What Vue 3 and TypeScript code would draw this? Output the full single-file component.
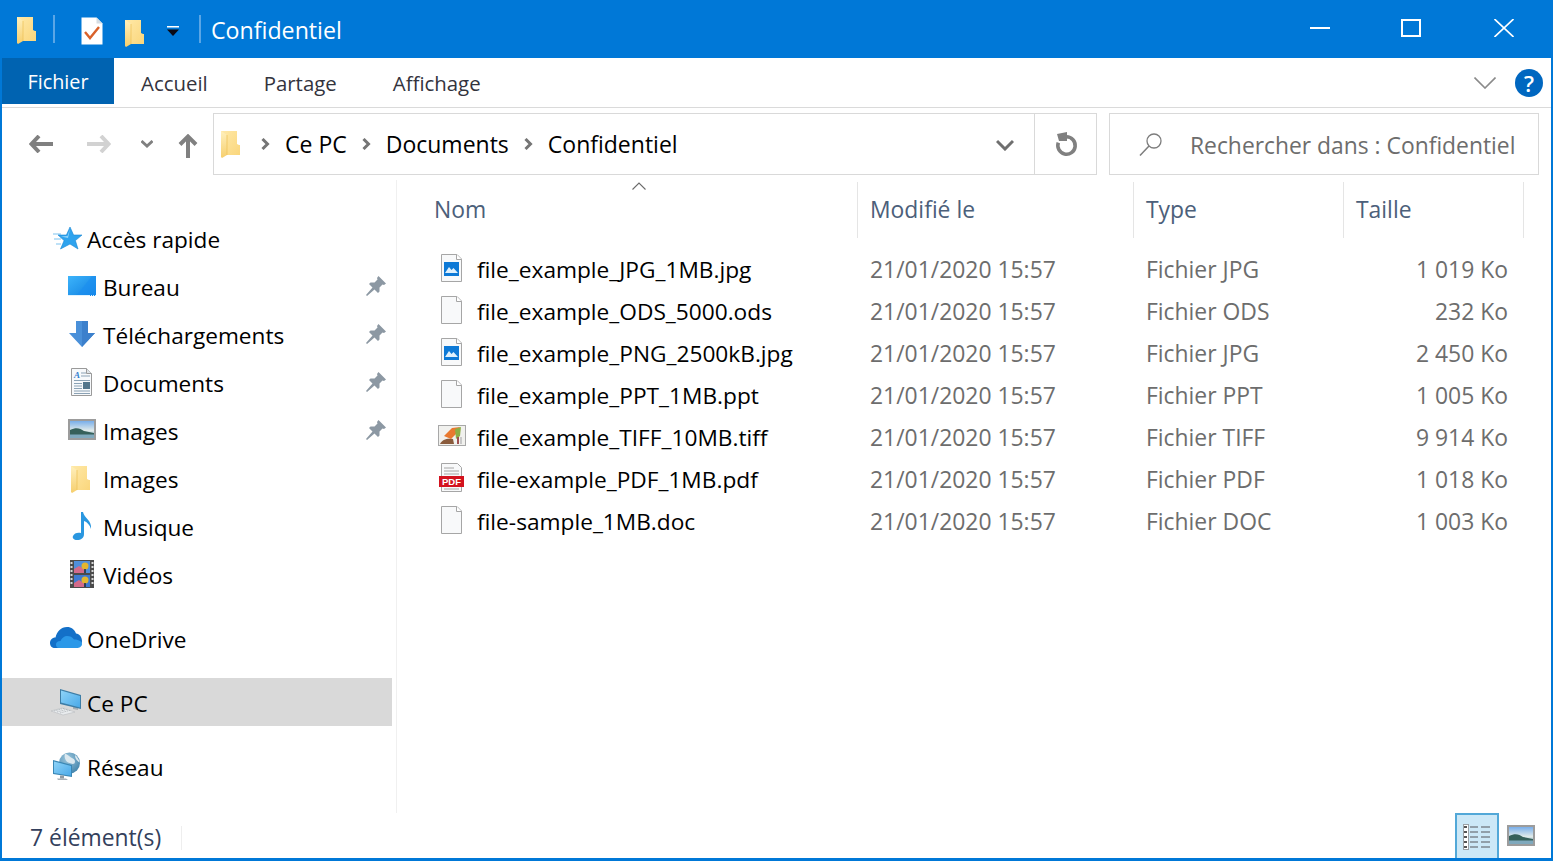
<script setup lang="ts">
interface NavItem {
  label: string;
  icon: string;
  pinned?: boolean;
  sub?: boolean;
  active?: boolean;
}

interface FileRow {
  name: string;
  icon: string;
  type: string;
  size: string;
}

const tabs = ['Accueil', 'Partage', 'Affichage'];
const crumbs = ['Ce PC', 'Documents', 'Confidentiel'];

// sidebar groups, a gap sits between each of them
const navGroups: NavItem[][] = [
  [
    { label: 'Accès rapide', icon: 'i-star' },
    { label: 'Bureau', icon: 'i-desktop', pinned: true, sub: true },
    { label: 'Téléchargements', icon: 'i-download', pinned: true, sub: true },
    { label: 'Documents', icon: 'i-docs', pinned: true, sub: true },
    { label: 'Images', icon: 'i-pictures', pinned: true, sub: true },
    { label: 'Images', icon: 'i-folder', sub: true },
    { label: 'Musique', icon: 'i-music', sub: true },
    { label: 'Vidéos', icon: 'i-video', sub: true },
  ],
  [{ label: 'OneDrive', icon: 'i-cloud' }],
  [{ label: 'Ce PC', icon: 'i-pc', active: true }],
  [{ label: 'Réseau', icon: 'i-network' }],
];

const files: FileRow[] = [
  { name: 'file_example_JPG_1MB.jpg', icon: 'i-jpg', type: 'Fichier JPG', size: '1 019 Ko' },
  { name: 'file_example_ODS_5000.ods', icon: 'i-blank', type: 'Fichier ODS', size: '232 Ko' },
  { name: 'file_example_PNG_2500kB.jpg', icon: 'i-jpg', type: 'Fichier JPG', size: '2 450 Ko' },
  { name: 'file_example_PPT_1MB.ppt', icon: 'i-blank', type: 'Fichier PPT', size: '1 005 Ko' },
  { name: 'file_example_TIFF_10MB.tiff', icon: 'i-tiff', type: 'Fichier TIFF', size: '9 914 Ko' },
  { name: 'file-example_PDF_1MB.pdf', icon: 'i-pdf', type: 'Fichier PDF', size: '1 018 Ko' },
  { name: 'file-sample_1MB.doc', icon: 'i-blank', type: 'Fichier DOC', size: '1 003 Ko' },
];

const modified = '21/01/2020 15:57';
</script>

<template>
  <div class="window">
    <!-- icons used more than once -->
    <svg class="defs" aria-hidden="true">
      <defs>
        <linearGradient id="folder-fill" x1="0" y1="0" x2="1" y2="1">
          <stop offset="0" stop-color="#ffe9a8" />
          <stop offset="1" stop-color="#fad67c" />
        </linearGradient>
        <linearGradient id="folder-flap" x1="0" y1="0" x2="0" y2="1">
          <stop offset="0" stop-color="#fff0bd" />
          <stop offset="1" stop-color="#f6cf6e" />
        </linearGradient>
        <linearGradient id="sky" x1="0" y1="0" x2="0" y2="1">
          <stop offset="0" stop-color="#6ea8ea" />
          <stop offset="0.55" stop-color="#dfeaea" />
          <stop offset="1" stop-color="#6d9cb0" />
        </linearGradient>
        <linearGradient id="screen" x1="0" y1="0" x2="1" y2="1">
          <stop offset="0" stop-color="#3db4fb" />
          <stop offset="1" stop-color="#0f7fe0" />
        </linearGradient>
        <linearGradient id="pc-screen" x1="0" y1="0" x2="1" y2="1">
          <stop offset="0" stop-color="#8ed3f8" />
          <stop offset="1" stop-color="#4aa9e8" />
        </linearGradient>
        <radialGradient id="globe" cx=".4" cy=".3" r=".8">
          <stop offset="0" stop-color="#9cc6dc" />
          <stop offset="1" stop-color="#3c7fa8" />
        </radialGradient>
      </defs>
      <symbol id="i-folder" viewBox="0 0 32 32">
        <path d="M5 4h16v13l2 1h1v10H5z" fill="url(#folder-fill)" />
        <path d="M5 4l6 4v20l-5 3-1-1z" fill="url(#folder-flap)" />
        <path d="M11 8v20" stroke="#eec35c" stroke-width=".8" />
      </symbol>
      <symbol id="i-star" viewBox="0 0 32 32">
        <path d="M3 12h8M4 17h7M6 22h5" stroke="#a9d8f5" stroke-width="1.400" />
        <path d="M20 5l3.600 8H32l-6.600 5.600L28 27l-8-5-9.500 5 3.600-8.400L8 13h8.400z" fill="#2ea3ee" stroke="#1a86d4" stroke-width=".6" />
        <path d="M20 7l-2.500 7-6.500 .5 7 1.500z" fill="#8fd3fa" />
      </symbol>
      <symbol id="i-desktop" viewBox="0 0 32 32">
        <rect x="2" y="6" width="28" height="20" fill="url(#screen)" />
        <path d="M10 26L26 6h4v20z" fill="#1b8ef0" opacity=".6" />
        <path d="M2 25.500h28" stroke="#dff2ff" stroke-width="1" stroke-dasharray="22 1 1 1 1 1" />
      </symbol>
      <symbol id="i-download" viewBox="0 0 32 32">
        <path d="M10 3h12v12h7L16 29 3 15h7z" fill="#4a90d9" />
        <path d="M16 3h6v12h7L16 29z" fill="#3c80cc" />
      </symbol>
      <symbol id="i-pictures" viewBox="0 0 32 32">
        <rect x="3" y="6" width="26" height="19" fill="url(#sky)" stroke="#9c9c9c" stroke-width="2" />
        <path d="M4 16c6-3 10-2 14 1l10 2v2H4z" fill="#35605a" />
        <path d="M4 20.500h24V24H4z" fill="#7fa9bd" />
      </symbol>
      <symbol id="i-music" viewBox="0 0 32 32">
        <path d="M15 2h2c1 6 9 8 8 17-1-4-4-7-7-8v13c0 4-3 6-7 6-3 0-5-2-4-4 1-3 5-4 8-3z" fill="#2a97e0" />
      </symbol>
      <symbol id="i-video" viewBox="0 0 32 32">
        <rect x="4" y="2" width="24" height="28" fill="#4b4b4b" />
        <path d="M5.500 4v24M26.500 4v24" stroke="#d8d8d8" stroke-width="2" stroke-dasharray="2 2" />
        <rect x="8" y="3" width="16" height="12" fill="#4f8fdc" />
        <rect x="8" y="17" width="16" height="12" fill="#3f7ad0" />
        <path d="M8 11l5-3 5 3v4H8zM8 25l5-3 5 3v4H8z" fill="#d36a8a" />
        <circle cx="19" cy="8" r="3.500" fill="#e3b62f" />
        <circle cx="19" cy="22" r="3.500" fill="#e3b62f" />
        <path d="M19 11v4M19 25v4" stroke="#2d2d2d" stroke-width="1.500" />
      </symbol>
      <symbol id="i-cloud" viewBox="0 0 32 32">
        <path d="M5 26c-3 0-5-2-5-5s2-5.500 5.500-5.500C7 9.500 11 5 17 5c4.500 0 7.500 2.500 9 6.500 3.500 .5 6 3.500 6 7.500s-3 7-7 7z" fill="#1370c8" />
        <path d="M9 26c-2 0-3-1.500-3-3.500S7.500 19 10.500 19c1-3 4-5 6.500-5 3 0 5.500 1 7 3.500 4 0 8 1.500 8 4.500 0 2.500-2.500 4-5.500 4z" fill="#2b98e8" />
      </symbol>
      <symbol id="i-pc" viewBox="0 0 32 32">
        <path d="M1 25l11-3 13 4-12 3z" fill="#e9ecee" stroke="#b3b7ba" stroke-width=".5" />
        <path d="M4 25l11-3M7 26l11-3M10 27l11-3" stroke="#a8adb2" stroke-width=".7" stroke-dasharray="1.500 .8" />
        <path d="M23 20l5 1v3l-5-1z" fill="#a6adb3" />
        <path d="M10 3l21 6v14L10 18z" fill="#3d7da6" />
        <path d="M11 4.500l19 5.500v11.500L11 16.500z" fill="url(#pc-screen)" />
      </symbol>
      <symbol id="i-network" viewBox="0 0 32 32">
        <circle cx="19.500" cy="13" r="10.500" fill="url(#globe)" />
        <path d="M15 3.500c3 1 4 3 6 4s4 1.500 4 4-2 3-4 2-4-1-5-3-2-4-1-7zM25 5c2.500 2 4 4.500 4.500 7.500C27.500 11 25 9 25 5z" fill="#dbe8ef" />
        <path d="M3 10l19 5v12L3 24z" fill="#3a87b5" />
        <path d="M4 11.500l17 4.500v9.800L4 23z" fill="url(#pc-screen)" />
        <path d="M7 28.500h9l2 1.500H8z" fill="#a9b2b9" />
        <path d="M10 25.500h4v3h-4z" fill="#8f9aa2" />
      </symbol>
      <symbol id="i-blank" viewBox="0 0 32 32">
        <path d="M5.500 2.500h15.500l4.500 4.500v22.500h-20z" fill="#f8f9fa" stroke="#a6a6a6" />
        <path d="M20.500 2.500v5h5" fill="#fff" stroke="#a6a6a6" />
      </symbol>
      <symbol id="i-jpg" viewBox="0 0 32 32">
        <use href="#i-blank" width="32" height="32" />
        <rect x="8" y="10" width="15" height="14" fill="#0d79d6" />
        <path d="M9 21l4-6 2.500 3 2-2 4.500 5z" fill="#dff0fc" />
      </symbol>
      <symbol id="i-tiff" viewBox="0 0 32 32">
        <rect x="2.500" y="5.500" width="27" height="20" fill="#f1f1ee" stroke="#a8a8a8" />
        <path d="M4 24c2-5 8-6 13-5l1 5z" fill="#8a5b3c" />
        <path d="M8 16l8-8 8-1-3 6-6 6z" fill="#e9792f" />
        <path d="M19 9l6-2-1 9-4 3z" fill="#8cae45" />
        <rect x="21" y="17" width="2" height="7" fill="#a05050" />
        <rect x="24" y="17" width="2" height="7" fill="#c9c9c9" />
      </symbol>
      <symbol id="i-pin" viewBox="0 0 20 20">
        <path d="M12.500 0L20 7.500l-2 1.500-1.500-.5-3 3 0 4-1.500 1.500-3.500-3.500L1 20l-1-1 6.500-7.500L3 8l1.500-1.500 4 0 3-3-.5-1.500z" fill="#8c98a3" />
      </symbol>
    </svg>

    <header class="titlebar">
      <svg class="tb-folder"><use href="#i-folder" /></svg>
      <span class="tb-sep"></span>
      <svg class="tb-check" viewBox="0 0 22 28">
        <path d="M.5.5h15l6 6v21H.5z" fill="#fff" />
        <path d="M15.500.5v6h6" fill="#d5dde4" />
        <path d="M4 15l5 6 9-11" fill="none" stroke="#d9612a" stroke-width="2.400" />
      </svg>
      <svg class="tb-folder tb-folder-2"><use href="#i-folder" /></svg>
      <svg class="tb-drop" viewBox="0 0 12 10">
        <path d="M0 0h12v1.500H0z" fill="#fff" />
        <path d="M0 3.500h12L6 10z" fill="#0a0a14" />
      </svg>
      <span class="tb-sep tb-sep-2"></span>
      <span class="tb-title">Confidentiel</span>
      <div class="tb-controls">
        <svg class="ctl ctl-min" viewBox="0 0 20 18"><path d="M0 9h20" stroke="#fff" stroke-width="2" /></svg>
        <svg class="ctl ctl-max" viewBox="0 0 20 18"><rect x="1" y="1" width="18" height="16" fill="none" stroke="#fff" stroke-width="2" /></svg>
        <svg class="ctl ctl-close" viewBox="0 0 20 18"><path d="M.5 0l19 18M19.500 0L.5 18" stroke="#fff" stroke-width="1.600" /></svg>
      </div>
    </header>

    <nav class="ribbon">
      <span class="tab tab-file">Fichier</span>
      <span v-for="tab in tabs" :key="tab" class="tab">{{ tab }}</span>
      <svg class="rb-chevron" viewBox="0 0 22 12"><path d="M.5.500L11 11 21.500.5" fill="none" stroke="#8a8a8a" stroke-width="1.600" /></svg>
      <span class="rb-help">?</span>
    </nav>

    <section class="toolbar">
      <div class="nav-btns">
        <svg class="arrow arrow-back" viewBox="0 0 24 18"><path d="M24 9H3M10 1L2.500 9l7.500 8" fill="none" stroke="#808080" stroke-width="4" /></svg>
        <svg class="arrow arrow-fwd" viewBox="0 0 24 18"><path d="M0 9h21M14 1l7.500 8-7.500 8" fill="none" stroke="#d2d2d2" stroke-width="4" /></svg>
        <svg class="arrow arrow-down" viewBox="0 0 12 8"><path d="M.5 1l5.500 5 5.500-5" fill="none" stroke="#808080" stroke-width="2.800" /></svg>
        <svg class="arrow arrow-up" viewBox="0 0 20 24"><path d="M10 24V3M2 10.500l8-8 8 8" fill="none" stroke="#808080" stroke-width="4" /></svg>
      </div>
      <div class="address">
        <svg class="ad-folder"><use href="#i-folder" /></svg>
        <template v-for="crumb in crumbs" :key="crumb">
          <svg class="crumb-sep" viewBox="0 0 9 12"><path d="M1.500 1l5 5-5 5" fill="none" stroke="#757575" stroke-width="3" /></svg>
          <span class="crumb">{{ crumb }}</span>
        </template>
        <svg class="ad-drop" viewBox="0 0 18 12"><path d="M1 2l8 8 8-8" fill="none" stroke="#6f6f6f" stroke-width="3" /></svg>
        <div class="ad-refresh">
          <svg viewBox="0 0 24 26">
            <path d="M12.500 5.800a8.700 8.700 0 1 1-8.200 5.800" fill="none" stroke="#808080" stroke-width="3.600" />
            <path d="M3 3l10-2v9H5z" fill="#808080" />
          </svg>
        </div>
      </div>
      <div class="search">
        <svg class="search-ico" viewBox="0 0 24 24">
          <circle cx="15" cy="9" r="7" fill="none" stroke="#7d7d7d" stroke-width="1.300" />
          <path d="M10 14L1 23.500" stroke="#7d7d7d" stroke-width="1.500" />
        </svg>
        <span class="search-text">Rechercher dans : Confidentiel</span>
      </div>
    </section>

    <main class="content">
      <aside class="sidebar">
        <div v-for="(group, g) in navGroups" :key="g" class="nav-group">
          <div
            v-for="item in group"
            :key="item.label + item.icon"
            class="nav-row"
            :class="{ sub: item.sub, active: item.active }"
          >
            <svg v-if="item.icon === 'i-docs'" class="ico" viewBox="0 0 32 32">
              <path d="M5.500 2.500h15l5 5v22h-20z" fill="#f7f9fb" stroke="#9a9a9a" />
              <path d="M20.500 2.500v5h5" fill="#dde3e8" stroke="#9a9a9a" />
              <text x="8" y="12" font-size="9" font-style="italic" font-weight="700" fill="#2f7fd0" font-family="Liberation Serif, serif">A</text>
              <path d="M15 7h5M15 10h9M8 14.500h16M8 25h16M8 27.500h16M8 17.500h8M8 20h8M8 22.500h8" stroke="#8ba2b5" stroke-width="1" />
              <rect x="17" y="16" width="7" height="7" fill="#53768c" />
            </svg>
            <svg v-else class="ico"><use :href="'#' + item.icon" /></svg>
            <span class="nav-label">{{ item.label }}</span>
            <svg v-if="item.pinned" class="pin"><use href="#i-pin" /></svg>
          </div>
        </div>
      </aside>

      <section class="list">
        <div class="sort-caret">
          <svg viewBox="0 0 14 8"><path d="M.5 7.500L7 1l6.500 6.500" fill="none" stroke="#6a6a6a" stroke-width="1.100" /></svg>
        </div>
        <div class="grid grid-head">
          <span>Nom</span>
          <span>Modifié le</span>
          <span>Type</span>
          <span>Taille</span>
        </div>
        <div class="rows">
          <div v-for="file in files" :key="file.name" class="grid grid-row">
            <span class="cell-name">
              <svg v-if="file.icon === 'i-pdf'" class="ico" viewBox="0 0 32 32">
                <path d="M5.500 1.500h16l4 4v24h-20z" fill="#f8f9fa" stroke="#a6a6a6" />
                <path d="M8 6h10M8 9h15M8 12h15M8 27h15" stroke="#a6a6a6" stroke-width="1" />
                <rect x="3" y="14" width="25" height="11" fill="#d3121e" />
                <text x="15.500" y="23" text-anchor="middle" font-size="9.500" font-weight="700" fill="#fff" font-family="Liberation Sans, sans-serif">PDF</text>
              </svg>
              <svg v-else class="ico"><use :href="'#' + file.icon" /></svg>
              <span class="name-text">{{ file.name }}</span>
            </span>
            <span class="cell-muted">{{ modified }}</span>
            <span class="cell-muted">{{ file.type }}</span>
            <span class="cell-muted cell-size">{{ file.size }}</span>
          </div>
        </div>
      </section>
    </main>

    <footer class="status">
      <span class="status-count">7 élément(s)</span>
      <span class="status-sep"></span>
      <div class="view-btn">
        <svg viewBox="0 0 28 26">
          <rect x=".5" y=".5" width="5" height="25" fill="#fff" stroke="#9aa0a5" />
          <path d="M1 3h4M1 8h4M1 13h4M1 18h4M1 23h4" stroke="#555" stroke-width="2" stroke-dasharray="3 1" />
          <path d="M7 3h8M18 3h9M7 8h8M18 8h9M7 13h8M18 13h9M7 18h8M18 18h9M7 23h8M18 23h9" stroke="#7d8790" stroke-width="1.300" />
        </svg>
      </div>
      <svg class="view-pic"><use href="#i-pictures" /></svg>
    </footer>
  </div>
</template>

<style>
html,
body {
  margin: 0;
  height: 100%;
  overflow: hidden;
  background: #fff;
}
</style>

<style scoped>
.window {
  box-sizing: border-box;
  width: 1553px;
  height: 861px;
  display: flex;
  flex-direction: column;
  border: solid #0078d7;
  border-width: 0 2px 3px;
  background: #fff;
  color: #000;
  font-family: "Open Sans", "Noto Sans", sans-serif;
  font-size: 22.9px;
  overflow: hidden;
}

.defs {
  position: absolute;
  width: 0;
  height: 0;
}

/* barre de titre */
.titlebar {
  height: 58px;
  flex-shrink: 0;
  display: flex;
  align-items: center;
  background: #0078d7;
  color: #fff;
}

.tb-folder {
  width: 32px;
  height: 32px;
  margin-left: 10px;
}

.tb-folder-2 {
  margin: 6px 0 0 17px;
}

.tb-sep {
  width: 2px;
  height: 28px;
  background: #5aa6e6;
  margin-left: 9px;
}

.tb-sep-2 {
  margin-left: 20px;
}

.tb-check {
  width: 22px;
  height: 28px;
  margin: 4px 0 0 26px;
}

.tb-drop {
  width: 12px;
  height: 10px;
  margin: 4px 0 0 15px;
}

.tb-title {
  margin: 2px 0 0 10px;
  font-size: 23.2px;
}

.tb-controls {
  margin-left: auto;
  display: flex;
  align-items: center;
  padding-right: 37px;
}

.ctl {
  width: 20px;
  height: 18px;
}

.ctl-max {
  margin-left: 71px;
}

.ctl-close {
  margin-left: 73px;
}

.ctl-min,
.ctl-max,
.ctl-close {
  margin-bottom: 2px;
}

/* ruban */
.ribbon {
  height: 50px;
  flex-shrink: 0;
  display: flex;
  align-items: flex-start;
  border-bottom: 1px solid #dadada;
  box-sizing: border-box;
  color: #33333d;
}

.tab {
  height: 46px;
  line-height: 50px;
  margin-left: 28px;
  margin-right: 28px;
  font-size: 20.4px;
}

.tab-file {
  margin: 0 -1px 0 0;
  width: 112px;
  line-height: 48px;
  text-align: center;
  background: #0063b1;
  color: #fff;
  font-size: 19.8px;
}

.rb-chevron {
  width: 22px;
  height: 12px;
  margin: 19px 0 0 auto;
}

.rb-help {
  box-sizing: border-box;
  width: 28px;
  height: 28px;
  margin: 11px 8px 0 19px;
  border-radius: 50%;
  background: #0067c0;
  color: #fff;
  font-size: 22px;
  font-weight: 600;
  line-height: 28px;
  text-align: center;
}

/* barre d'adresse */
.toolbar {
  height: 72px;
  flex-shrink: 0;
  display: flex;
  align-items: flex-start;
  padding-top: 5px;
  box-sizing: border-box;
}

.nav-btns {
  width: 211px;
  height: 62px;
  flex-shrink: 0;
  display: flex;
  align-items: center;
}

.arrow-back {
  width: 24px;
  height: 18px;
  margin-left: 27px;
}

.arrow-fwd {
  width: 24px;
  height: 18px;
  margin-left: 34px;
}

.arrow-down {
  width: 12px;
  height: 8px;
  margin-left: 30px;
}

.arrow-up {
  width: 20px;
  height: 24px;
  margin: 4px 0 0 25px;
}

.address {
  box-sizing: border-box;
  width: 884px;
  height: 62px;
  display: flex;
  align-items: center;
  border: 1px solid #d9d9d9;
}

.ad-folder {
  width: 32px;
  height: 32px;
  margin: 0 -1px 2px 2px;
  flex-shrink: 0;
}

.crumb-sep {
  width: 9px;
  height: 12px;
  margin: 0 15px 0 15px;
  flex-shrink: 0;
}

.crumb {
  color: #000;
  font-size: 23px;
}

.ad-folder + .crumb-sep {
  margin-left: 14px;
}

.ad-drop {
  width: 18px;
  height: 12px;
  margin: 2px 20px 0 auto;
}

.ad-refresh {
  width: 61px;
  height: 100%;
  border-left: 1px solid #d9d9d9;
  display: flex;
  align-items: center;
  justify-content: center;
}

.ad-refresh svg {
  width: 24px;
  height: 26px;
}

.search {
  box-sizing: border-box;
  width: 430px;
  height: 62px;
  margin-left: 12px;
  display: flex;
  align-items: center;
  border: 1px solid #d9d9d9;
  color: #6d6d6d;
  white-space: nowrap;
}

.search-ico {
  width: 24px;
  height: 24px;
  margin: 0 27px 0 29px;
  flex-shrink: 0;
}

.search-text {
  padding-top: 2px;
  font-size: 22.85px;
}

/* zone principale */
.content {
  flex: 1;
  min-height: 0;
  display: flex;
}

.sidebar {
  box-sizing: border-box;
  width: 395px;
  flex-shrink: 0;
  padding-top: 34px;
  display: flex;
  flex-direction: column;
  gap: 16px;
  border-right: 1px solid #f0f0f0;
}

.nav-row {
  height: 48px;
  width: 390px;
  box-sizing: border-box;
  display: flex;
  align-items: center;
  gap: 5px;
  padding: 0 6px 0 48px;
}

.nav-row.sub {
  padding-left: 64px;
}

.nav-row.active {
  background: #d9d9d9;
}

.ico {
  width: 32px;
  height: 32px;
  flex-shrink: 0;
}

.nav-label {
  padding-top: 2px;
  white-space: nowrap;
  font-size: 22.6px;
}

.pin {
  width: 20px;
  height: 20px;
  margin-left: auto;
}

.list {
  flex: 1;
  min-width: 0;
  position: relative;
  padding: 2px 0 0 25px;
}

.sort-caret {
  position: absolute;
  left: 235px;
  top: 2px;
  display: flex;
}

.sort-caret svg {
  width: 14px;
  height: 8px;
}

.grid {
  display: grid;
  grid-template-columns: 436px 276px 210px 180px;
}

.grid-head {
  height: 52px;
  color: #4c607a;
}

.grid-head span {
  padding-left: 12px;
  line-height: 56px;
  border-right: 1px solid #e5e5e5;
}

.rows {
  margin-top: 13px;
}

.grid-row {
  height: 42px;
  align-items: center;
}

.cell-name {
  display: flex;
  align-items: center;
  padding-left: 14px;
  gap: 9px;
}

.name-text {
  padding-top: 2px;
  white-space: nowrap;
  font-size: 22.7px;
}

.cell-muted {
  padding: 2px 0 0 12px;
  color: #6d6d6d;
  white-space: nowrap;
}

.cell-size {
  padding-left: 0;
  padding-right: 16px;
  text-align: right;
}

/* barre d'etat */
.status {
  height: 45px;
  flex-shrink: 0;
  display: flex;
  align-items: center;
  color: #33405c;
}

.status-count {
  margin-left: 28px;
  padding-top: 4px;
}

.status-sep {
  width: 1px;
  height: 24px;
  background: #eeeeee;
  margin: 4px 0 0 20px;
}

.view-btn {
  box-sizing: border-box;
  width: 44px;
  height: 45px;
  margin-left: auto;
  background: #cce8f7;
  border: solid #52a8d8;
  border-width: 2px 2px 0;
  display: flex;
  align-items: center;
  justify-content: center;
}

.view-btn svg {
  width: 28px;
  height: 26px;
}

.view-pic {
  width: 32px;
  height: 32px;
  margin: 0 14px 0 6px;
}
</style>
